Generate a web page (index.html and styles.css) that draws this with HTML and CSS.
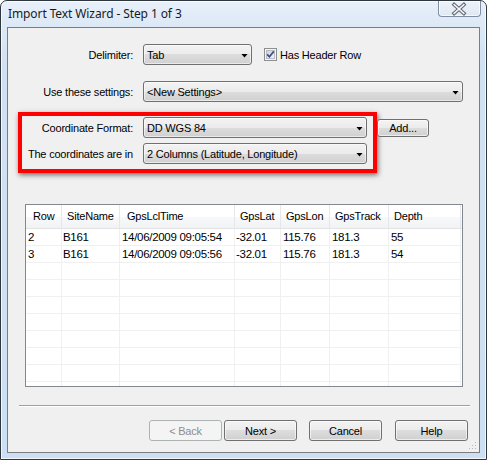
FILE: index.html
```html
<!DOCTYPE html>
<html>
<head>
<meta charset="utf-8">
<title>Import Text Wizard</title>
<link rel="stylesheet" href="styles.css">
</head>
<body>
<div class="window">
  <div class="titlebar">
    <span class="title">Import Text Wizard - Step 1 of 3</span>
    <div class="close">
      <svg width="43" height="16" viewBox="0 0 43 16">
        <path d="M16.5 3.5 L26.5 12.5 M26.5 3.5 L16.5 12.5" stroke="#5e6570" stroke-width="3.6" stroke-linecap="square"/>
        <path d="M16.5 3.5 L26.5 12.5 M26.5 3.5 L16.5 12.5" stroke="#f4f6f9" stroke-width="1.5" stroke-linecap="square"/>
      </svg>
    </div>
  </div>
  <div class="client">
    <div class="row row-delim">
      <span class="lbl">Delimiter:</span>
      <div class="combo combo-tab"><span class="ctext">Tab</span><span class="arrow"></span></div>
      <span class="check">
        <svg width="13" height="13" viewBox="0 0 13 13">
          <defs>
            <linearGradient id="cb" x1="0" y1="0" x2="1" y2="1">
              <stop offset="0" stop-color="#cbcfd5"/>
              <stop offset="1" stop-color="#f6f6f6"/>
            </linearGradient>
          </defs>
          <rect x="0.5" y="0.5" width="12" height="12" fill="#f4f4f4" stroke="#8e8f8f"/>
          <rect x="2.5" y="2.5" width="8" height="8" fill="url(#cb)" stroke="#b9bcc2"/>
          <path d="M3.2 6.4 L5.4 8.8 L9.8 3.4" fill="none" stroke="#3a4f8a" stroke-width="1.7"/>
        </svg>
      </span>
      <span class="checktext">Has Header Row</span>
    </div>
    <div class="row row-settings">
      <span class="lbl">Use these settings:</span>
      <div class="combo combo-settings"><span class="ctext">&lt;New Settings&gt;</span><span class="arrow"></span></div>
    </div>
    <div class="coord">
      <div class="redbox">
        <div class="row">
          <span class="lbl lbl-in">Coordinate Format:</span>
          <div class="combo combo-coord"><span class="ctext">DD WGS 84</span><span class="arrow"></span></div>
        </div>
        <div class="row row-second">
          <span class="lbl lbl-in">The coordinates are in</span>
          <div class="combo combo-coord"><span class="ctext">2 Columns (Latitude, Longitude)</span><span class="arrow"></span></div>
        </div>
      </div>
      <button class="btn btn-add">Add...</button>
    </div>
    <div class="grid">
      <div class="ghead">
        <div class="hc hc-row">Row</div>
        <div class="hc">SiteName</div>
        <div class="hc hc-time">GpsLclTime</div>
        <div class="hc">GpsLat</div>
        <div class="hc">GpsLon</div>
        <div class="hc">GpsTrack</div>
        <div class="hc">Depth</div>
      </div>
      <div class="grow">
        <div class="gc">2</div><div class="gc gc-site">B161</div><div class="gc">14/06/2009 09:05:54</div><div class="gc gc-lat">-32.01</div><div class="gc">115.76</div><div class="gc">181.3</div><div class="gc">55</div>
      </div>
      <div class="grow">
        <div class="gc">3</div><div class="gc gc-site">B161</div><div class="gc">14/06/2009 09:05:56</div><div class="gc gc-lat">-32.01</div><div class="gc">115.76</div><div class="gc">181.3</div><div class="gc">54</div>
      </div>
      <div class="grow"><div class="gc"></div><div class="gc"></div><div class="gc"></div><div class="gc"></div><div class="gc"></div><div class="gc"></div><div class="gc"></div></div>
      <div class="grow"><div class="gc"></div><div class="gc"></div><div class="gc"></div><div class="gc"></div><div class="gc"></div><div class="gc"></div><div class="gc"></div></div>
      <div class="grow"><div class="gc"></div><div class="gc"></div><div class="gc"></div><div class="gc"></div><div class="gc"></div><div class="gc"></div><div class="gc"></div></div>
      <div class="grow"><div class="gc"></div><div class="gc"></div><div class="gc"></div><div class="gc"></div><div class="gc"></div><div class="gc"></div><div class="gc"></div></div>
      <div class="grow"><div class="gc"></div><div class="gc"></div><div class="gc"></div><div class="gc"></div><div class="gc"></div><div class="gc"></div><div class="gc"></div></div>
      <div class="grow"><div class="gc"></div><div class="gc"></div><div class="gc"></div><div class="gc"></div><div class="gc"></div><div class="gc"></div><div class="gc"></div></div>
      <div class="grow"><div class="gc"></div><div class="gc"></div><div class="gc"></div><div class="gc"></div><div class="gc"></div><div class="gc"></div><div class="gc"></div></div>
      <div class="grow"><div class="gc"></div><div class="gc"></div><div class="gc"></div><div class="gc"></div><div class="gc"></div><div class="gc"></div><div class="gc"></div></div>
    </div>
    <div class="sep"></div>
    <div class="buttons">
      <button class="btn btn-disabled">&lt; Back</button>
      <button class="btn btn-next">Next &gt;</button>
      <button class="btn btn-cancel">Cancel</button>
      <button class="btn btn-help">Help</button>
    </div>
    <svg class="grip" width="8" height="8" viewBox="0 0 8 8">
      <rect x="6" y="0" width="1" height="1" fill="#b8b8b8"/>
      <rect x="3" y="3" width="1" height="1" fill="#b8b8b8"/>
      <rect x="6" y="3" width="1" height="1" fill="#b8b8b8"/>
      <rect x="0" y="6" width="1" height="1" fill="#b8b8b8"/>
      <rect x="3" y="6" width="1" height="1" fill="#b8b8b8"/>
      <rect x="6" y="6" width="1" height="1" fill="#b8b8b8"/>
    </svg>
  </div>
</div>
</body>
</html>
```

FILE: styles.css
```css
* { box-sizing: border-box; }

html, body {
  margin: 0;
  padding: 0;
}

body {
  width: 487px;
  height: 460px;
  overflow: hidden;
  background: #ffffff;
  font-family: "Liberation Sans", Arial, sans-serif;
  font-size: 11px;
  letter-spacing: -0.2px;
  color: #000;
}

.window {
  width: 487px;
  height: 460px;
  border: 1px solid #2e3640;
  border-radius: 7px 7px 0 0;
  background: linear-gradient(180deg, #e8f0fa 0px, #dce8f6 27px, #d1e1f3 60px, #cddff2 100%);
  box-shadow: inset 0 0 0 1px rgba(255, 255, 255, 0.75);
  padding: 0 6px 6px 6px;
  display: flex;
  flex-direction: column;
}

.titlebar {
  height: 26px;
  flex: none;
  display: flex;
  justify-content: space-between;
  align-items: flex-start;
}

.title {
  font-family: "Noto Sans", "Open Sans", sans-serif;
  font-size: 12px;
  letter-spacing: -0.1px;
  line-height: 26px;
  padding-left: 1px;
  color: #1a1a1a;
}

.close {
  width: 43px;
  height: 16px;
  margin-right: -1px;
  border: 1px solid #7f8ea3;
  border-top: none;
  border-radius: 0 0 4px 4px;
  background: linear-gradient(180deg, #eef3f9, #dfe8f3);
  box-shadow: inset 0 0 0 1px rgba(255, 255, 255, 0.7);
  display: flex;
}

.close svg { display: block; margin-left: -1px; }

.client {
  flex: 1;
  position: relative;
  border: 1px solid #7d7d7d;
  background: #f0f0f0;
  display: flex;
  flex-direction: column;
}

.row {
  display: flex;
  align-items: center;
  height: 21px;
}

.row-delim { margin-top: 16px; }
.row-settings { margin-top: 16px; }
.row-second { margin-top: 5px; }

.lbl {
  width: 125px;
  flex: none;
  text-align: right;
  margin-right: 10px;
  white-space: nowrap;
}

.lbl-in { width: 111px; }

.combo {
  height: 21px;
  flex: none;
  border: 1px solid #707070;
  border-radius: 3px;
  background: linear-gradient(180deg, #f3f3f3 0%, #ebebeb 50%, #dddddd 50%, #d0d0d0 100%);
  box-shadow: inset 0 0 0 1px rgba(255, 255, 255, 0.55);
  display: flex;
  align-items: center;
  padding-left: 3px;
}

.ctext { white-space: nowrap; }

.arrow {
  margin-left: auto;
  margin-right: 3px;
  margin-top: 2px;
  width: 7px;
  height: 4px;
  background: #000;
  clip-path: polygon(0 0, 100% 0, 50% 100%);
}

.combo-tab { width: 109px; }
.combo-settings { width: 320px; }
.combo-coord { width: 224px; }

.check {
  margin-left: 12px;
  width: 13px;
  height: 13px;
  display: flex;
}

.check svg { display: block; }

.checktext { margin-left: 3px; }

.coord {
  margin-top: 10px;
  margin-left: 10px;
  display: flex;
  align-items: flex-start;
}

.redbox {
  border: 4px solid #ff0000;
  padding: 1px 6px 5px 0;
  box-shadow: 1px 2px 5px rgba(0, 0, 0, 0.55);
}

.btn {
  font-family: "Liberation Sans", Arial, sans-serif;
  font-size: 11px;
  letter-spacing: -0.2px;
  color: #000;
  width: 73px;
  height: 21px;
  padding: 0;
  border: 1px solid #707070;
  border-radius: 3px;
  background: linear-gradient(180deg, #f3f3f3 0%, #ebebeb 50%, #dddddd 50%, #d0d0d0 100%);
  box-shadow: inset 0 0 0 1px rgba(255, 255, 255, 0.6);
  flex: none;
}

.btn-add {
  width: 52px;
  height: 18px;
  margin-top: 7px;
}

.btn-disabled {
  border-color: #adb2b5;
  background: #f4f4f4;
  color: #8d8d8d;
  box-shadow: none;
}

.grid {
  margin-top: 31px;
  margin-left: 17px;
  width: 438px;
  height: 183px;
  border: 1px solid #828790;
  background: #ffffff;
  overflow: hidden;
  flex: none;
}

.ghead,
.grow {
  display: grid;
  grid-template-columns: 36px 58px 115px 46px 49px 59px 72px;
}

.ghead {
  height: 24px;
  border-bottom: 1px solid #e2e2e2;
  background: linear-gradient(180deg, #ffffff 0%, #ffffff 50%, #f7f8fa 50%, #f2f3f5 100%);
}

.hc {
  line-height: 23px;
  padding-left: 5px;
  border-right: 1px solid #e5e7ea;
  white-space: nowrap;
}

.hc-row { padding-left: 7px; }
.hc-time { padding-left: 7px; }

.grow { height: 17px; }

.gc {
  font-size: 11.5px;
  line-height: 16px;
  padding-left: 2px;
  border-right: 1px solid #f0f0f0;
  border-bottom: 1px solid #f0f0f0;
  white-space: nowrap;
  letter-spacing: -0.3px;
}

.gc-site { padding-left: 1px; }
.gc-lat { padding-left: 1px; }

.sep {
  margin-top: 18px;
  margin-left: 11px;
  width: 451px;
  height: 2px;
  border-top: 1px solid #a0a0a0;
  border-bottom: 1px solid #ffffff;
  flex: none;
}

.buttons {
  margin-top: 13px;
  padding-right: 11px;
  display: flex;
  justify-content: flex-end;
}

.btn-next { margin-left: 2px; }
.btn-cancel { margin-left: 12px; }
.btn-help { margin-left: 13px; }

.grip {
  position: absolute;
  right: 2px;
  bottom: 2px;
}
```
